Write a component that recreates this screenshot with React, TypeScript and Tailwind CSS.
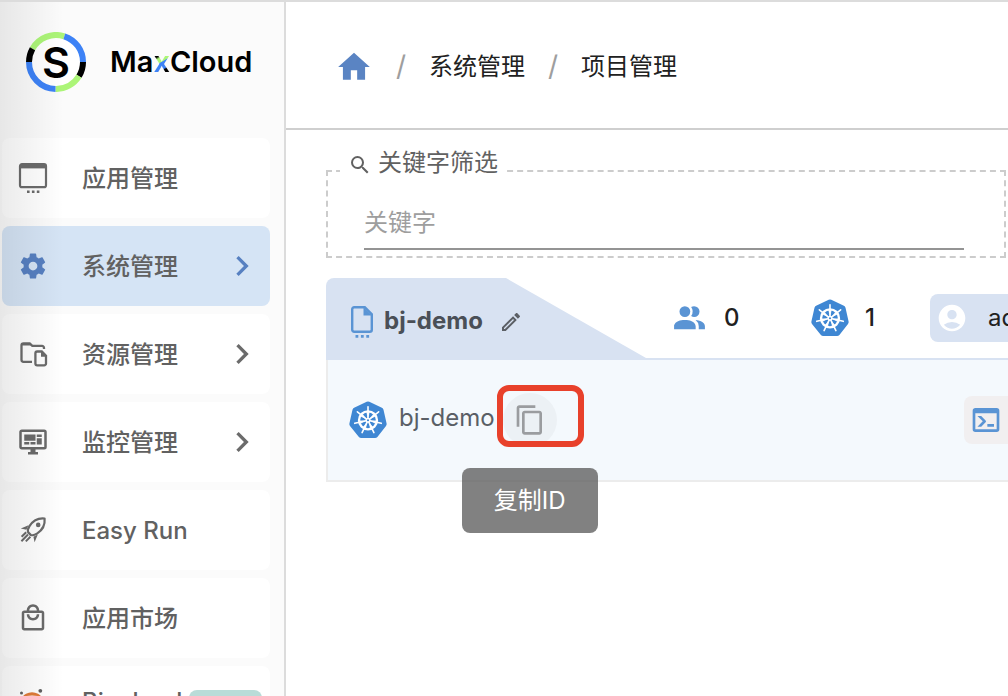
import type { ReactNode } from "react";
import {
  MdAccountCircle,
  MdChevronRight,
  MdContentCopy,
  MdOutlineEdit,
  MdSearch,
} from "react-icons/md";

type IconProps = { className?: string };

function PathIcon({ d, className }: { d: string; className?: string }) {
  return (
    <svg viewBox="0 0 24 24" fill="currentColor" className={className} aria-hidden="true">
      <path d={d} />
    </svg>
  );
}

const HOME = "M10,20V14H14V20H19V12H22L12,3L2,12H5V20H10Z";
const COG =
  "M12,15.5A3.5,3.5 0 0,1 8.5,12A3.5,3.5 0 0,1 12,8.5A3.5,3.5 0 0,1 15.5,12A3.5,3.5 0 0,1 12,15.5M19.43,12.97C19.47,12.65 19.5,12.33 19.5,12C19.5,11.67 19.47,11.34 19.43,11L21.54,9.37C21.73,9.22 21.78,8.95 21.66,8.73L19.66,5.27C19.54,5.05 19.27,4.96 19.05,5.05L16.56,6.05C16.04,5.66 15.5,5.32 14.87,5.07L14.5,2.42C14.46,2.18 14.25,2 14,2H10C9.75,2 9.54,2.18 9.5,2.42L9.13,5.07C8.5,5.32 7.96,5.66 7.44,6.05L4.95,5.05C4.73,4.96 4.46,5.05 4.34,5.27L2.34,8.73C2.21,8.95 2.27,9.22 2.46,9.37L4.57,11C4.53,11.34 4.5,11.67 4.5,12C4.5,12.33 4.53,12.65 4.57,12.97L2.46,14.63C2.27,14.78 2.21,15.05 2.34,15.27L4.34,18.73C4.46,18.95 4.73,19.03 4.95,18.95L7.44,17.94C7.96,18.34 8.5,18.68 9.13,18.93L9.5,21.58C9.54,21.82 9.75,22 10,22H14C14.25,22 14.46,21.82 14.5,21.58L14.87,18.93C15.5,18.67 16.04,18.34 16.56,17.94L19.05,18.95C19.27,19.03 19.54,18.95 19.66,18.73L21.66,15.27C21.78,15.05 21.73,14.78 21.54,14.63L19.43,12.97Z";
const MONITOR =
  "M21,16V4H3V16H21M21,2A2,2 0 0,1 23,4V16A2,2 0 0,1 21,18H14V20H16V22H8V20H10V18H3C1.89,18 1,17.1 1,16V4C1,2.89 1.89,2 3,2H21M5,6H14V11H5V6M15,6H19V8H15V6M19,9V14H15V9H19M5,12H9V14H5V12M10,12H14V14H10V12Z";
const BAG =
  "M19 6H17C17 3.24 14.76 1 12 1S7 3.24 7 6H5C3.9 6 3 6.9 3 8V20C3 21.11 3.9 22 5 22H19C20.11 22 21 21.11 21 20V8C21 6.89 20.11 6 19 6M12 3C13.66 3 15 4.34 15 6H9C9 4.34 10.34 3 12 3M19 20H5V8H19V20M12 12C10.34 12 9 10.66 9 9H7C7 11.76 9.24 14 12 14S17 11.76 17 9H15C15 10.66 13.66 12 12 12Z";
const USERS =
  "M16 17V19H2V17S2 13 9 13 16 17 16 17M12.5 7.5A3.5 3.5 0 1 0 9 11A3.5 3.5 0 0 0 12.5 7.5M15.94 13A5.32 5.32 0 0 1 18 17V19H22V17S22 13.37 15.94 13M15 4A3.39 3.39 0 0 0 13.07 4.59A5 5 0 0 1 13.07 10.41A3.39 3.39 0 0 0 15 11A3.5 3.5 0 0 0 15 4Z";
const CONSOLE =
  "M20,19V7H4V19H20M20,3A2,2 0 0,1 22,5V19A2,2 0 0,1 20,21H4A2,2 0 0,1 2,19V5C2,3.89 2.9,3 4,3H20M13,17V15H18V17H13M9.58,13L5.57,9H8.4L11.7,12.3C12.09,12.69 12.09,13.33 11.7,13.72L8.42,17H5.59L9.58,13Z";

function AppWindowIcon() {
  return (
    <svg viewBox="0 0 32 32" className="size-8" fill="currentColor" aria-hidden="true">
      <rect x="3" y="2.2" width="26" height="23" rx="2" fill="none" stroke="currentColor" strokeWidth="2.2" />
      <path d="M3 2h26v4.4H3z" />
      <path d="M10 28.4h2.6v2.6H10zM14.9 28.4h2.6v2.6h-2.6zM19.8 28.4h2.6v2.6h-2.6z" />
    </svg>
  );
}

function FolderFileIcon() {
  return (
    <svg viewBox="0 0 32 32" className="size-8" fill="none" stroke="currentColor" strokeWidth="2.3" aria-hidden="true">
      <path d="M15 23.8H6.5a2 2 0 0 1-2-2V7.300a2 2 0 0 1 2-2h6.200l2.600 2.600H25a2 2 0 0 1 2 2v1" />
      <path d="M4.500 7.500V5.500h8.500l2 2z" fill="currentColor" stroke="none" />
      <path d="M20.200 13.500h4.600l4.200 4.300v7.700a1.800 1.800 0 0 1-1.800 1.800h-7a1.800 1.800 0 0 1-1.800-1.800V15.300a1.800 1.800 0 0 1 1.800-1.800z" />
      <path d="M24 13v5.800h5.500z" fill="currentColor" stroke="none" />
    </svg>
  );
}

function RocketIcon() {
  return (
    <svg viewBox="0 0 32 32" className="size-8" fill="none" stroke="currentColor" strokeWidth="2.2" aria-hidden="true">
      <path d="M27.600 4.500c-6-.6-11.300 1.700-15.100 7.600-1.600 2.500-2 4.700-1.300 6.300l2.500 2.500c1.600.7 3.800.3 6.300-1.300 5.900-3.800 8.200-9.100 7.600-15.100z" strokeLinejoin="round" />
      <circle cx="21.200" cy="10.900" r="2.300" fill="currentColor" stroke="none" />
      <path d="M11.500 11.300L3.800 14.500l5.600 1.200zM20.800 20.600l-3.200 7.700-1.200-5.600z" fill="currentColor" stroke="none" />
      <path d="M9.200 18.200l-4.600 4.600M11 20.500l-6.600 6.700M13.400 22.800l-4.600 4.600" strokeWidth="2" />
    </svg>
  );
}

function PlanetIcon() {
  return (
    <svg viewBox="0 0 32 32" className="size-8" aria-hidden="true">
      <path d="M4.500 13a12.500 12.500 0 0 1 21 0c-5-3.500-16-3.500-21 0z" fill="#e07b39" />
      <path d="M4.500 19a12.500 12.500 0 0 0 21 0c-5 3.500-16 3.500-21 0z" fill="#e07b39" />
      <circle cx="23.300" cy="5.800" r="1.900" fill="#616161" />
      <circle cx="4.500" cy="8" r="1.500" fill="#616161" />
      <circle cx="7" cy="29" r="2" fill="#616161" />
    </svg>
  );
}

function KubernetesIcon({ className }: IconProps) {
  const spokes = [0, 1, 2, 3, 4, 5, 6];
  return (
    <svg viewBox="0 0 38 38" className={className} aria-hidden="true">
      <path
        d="M17.700.8a3 3 0 0 1 2.600 0l12.600 6a3 3 0 0 1 1.600 2l3.100 13.600a3 3 0 0 1-.6 2.500L28.400 36a3 3 0 0 1-2.300 1.100H12.200A3 3 0 0 1 9.900 36L1 24.900a3 3 0 0 1-.6-2.500L3.500 8.800a3 3 0 0 1 1.600-2z"
        fill="#3f87d3"
      />
      <g transform="translate(19 19.300)" stroke="#fff" fill="none">
        <circle r="9" strokeWidth="2.300" />
        <circle r="1.800" strokeWidth="1.400" />
        {spokes.map((i) => (
          <g key={i} transform={`rotate(${(i * 360) / 7})`}>
            <path d="M0-2V-13.600" strokeWidth="1.600" strokeLinecap="round" />
            <path d="M0-3L-1.400-8H1.400z" fill="#fff" strokeWidth=".4" />
          </g>
        ))}
      </g>
    </svg>
  );
}

function ProjectFileIcon() {
  return (
    <svg viewBox="0 0 24 34" className="h-[34px] w-6 text-[#5a94d4]" fill="currentColor" aria-hidden="true">
      <path
        d="M4.200 2.200h10.600l7 7v15.600a2 2 0 0 1-2 2H4.200a2 2 0 0 1-2-2V4.200a2 2 0 0 1 2-2z"
        fill="none"
        stroke="currentColor"
        strokeWidth="2.400"
      />
      <path d="M13.500 2v8.500h8.500z" />
      <path d="M5.500 30h2.800v2.800H5.500zM10.900 30h2.800v2.800h-2.800zM16.300 30h2.800v2.800h-2.800z" />
    </svg>
  );
}

function LogoMark() {
  return (
    <svg viewBox="0 0 60 60" className="size-[60px]" role="img" aria-label="MaxCloud">
      <circle cx="30" cy="30" r="27" fill="#fff" />
      <g fill="none" strokeWidth="6">
        <path d="M6.500 16.700A27 27 0 0 1 38.300 4.300" stroke="#acf578" />
        <path d="M38.300 4.300A27 27 0 0 1 57 30" stroke="#3d82f6" />
        <path d="M57 30A27 27 0 0 1 53 44.200" stroke="#000" />
        <path d="M53 44.200A27 27 0 0 1 29.500 57" stroke="#acf578" />
        <path d="M29.500 57A27 27 0 0 1 3 30" stroke="#3d82f6" />
        <path d="M3 30A27 27 0 0 1 6.500 16.700" stroke="#000" />
      </g>
      <text x="30" y="46" textAnchor="middle" fontFamily="Inter, sans-serif" fontSize="43" fontWeight="600">
        S
      </text>
    </svg>
  );
}

type MenuItem = {
  label: string;
  icon: ReactNode;
  active?: boolean;
  expandable?: boolean;
  badge?: string;
};

const MENU: MenuItem[] = [
  { label: "应用管理", icon: <AppWindowIcon /> },
  { label: "系统管理", icon: <PathIcon d={COG} className="size-[30px]" />, active: true, expandable: true },
  { label: "资源管理", icon: <FolderFileIcon />, expandable: true },
  { label: "监控管理", icon: <PathIcon d={MONITOR} className="size-[30px]" />, expandable: true },
  { label: "Easy Run", icon: <RocketIcon /> },
  { label: "应用市场", icon: <PathIcon d={BAG} className="size-[30px]" /> },
  { label: "Bigcloud", icon: <PlanetIcon />, badge: "Beta" },
];

function itemClass(item: MenuItem) {
  if (item.active) {
    return "flex h-20 shrink-0 items-center rounded-lg bg-[#d5e4f5] pr-2 text-[#5780c1]";
  }
  if (item.badge) {
    return "flex h-20 shrink-0 items-center rounded-lg bg-white pr-2 pb-2.5 text-[#6b6b6b]";
  }
  return "flex h-20 shrink-0 items-center rounded-lg bg-white pr-2 text-[#6b6b6b]";
}

function Sidebar() {
  return (
    <aside className="relative flex w-[286px] shrink-0 flex-col border-r-2 border-[#dcdcdc] bg-[#fbfbfb]">
      <div className="flex h-[136px] shrink-0 items-start gap-6 pt-[30px] pl-[26px]">
        <LogoMark />
        <span className="text-[29px] leading-[60px] font-semibold text-black">
          Ma
          <span className="bg-[linear-gradient(150deg,#000_34%,#acf578_40%,#acf578_50%,#3d82f6_52%,#3d82f6_68%,#000_72%)] bg-clip-text text-transparent">
            x
          </span>
          Cloud
        </span>
      </div>
      <nav className="flex flex-col gap-2 pr-3.5 pl-0.5">
        {MENU.map((item) => (
          <a key={item.label} href="#" className={itemClass(item)}>
            <span className="flex w-[62px] shrink-0 justify-center">{item.icon}</span>
            <span className="pt-0.5 pl-[18px] text-2xl font-medium text-[#616161]">{item.label}</span>
            {item.expandable && <MdChevronRight className="ml-auto size-10" />}
            {item.badge && (
              <span className="mt-2.5 ml-auto flex h-8 w-[73px] items-center justify-center rounded-lg bg-[#b9dcd8] text-xl text-[#00796b]">
                {item.badge}
              </span>
            )}
          </a>
        ))}
      </nav>
      <div className="pointer-events-none absolute inset-y-0 left-0 w-16 bg-linear-to-r from-black/8 to-transparent" />
    </aside>
  );
}

function Breadcrumb() {
  return (
    <nav
      aria-label="Breadcrumb"
      className="flex h-32 shrink-0 items-center border-b-2 border-[#cfcfcf] pt-1 pl-[49px] text-2xl text-[#212121]"
    >
      <a href="#" aria-label="Home" className="text-[#5a84c3]">
        <PathIcon d={HOME} className="size-[38px]" />
      </a>
      <span className="w-14 text-center text-[28px] text-[#9e9e9e]">/</span>
      <a href="#">系统管理</a>
      <span className="w-14 text-center text-[28px] text-[#9e9e9e]">/</span>
      <a href="#">项目管理</a>
    </nav>
  );
}

function KeywordFilter() {
  return (
    <fieldset className="mr-0.5 border-2 border-dashed border-[#cccccc] pr-10 pb-1.5 pl-9">
      <legend className="-ml-6 flex h-[52px] items-start gap-1.5 px-2 text-2xl leading-9 text-[#616161]">
        <MdSearch className="mt-2 size-6" />
        关键字筛选
      </legend>
      <input
        type="text"
        aria-label="关键字"
        placeholder="关键字"
        className="block h-[53px] w-full rounded-none border-b-2 border-[#949494] bg-transparent text-2xl outline-none placeholder:text-[#9e9e9e]"
      />
    </fieldset>
  );
}

function ProjectCard() {
  return (
    <section className="mt-5">
      <header className="flex h-[82px] items-center overflow-hidden border-b-2 border-[#d8e2f2]">
        <div className="flex h-20 w-80 shrink-0 items-center rounded-tl-lg bg-[#d8e2f2] pt-2 pl-6 [clip-path:polygon(0_0,180px_0,320px_100%,0_100%)]">
          <ProjectFileIcon />
          <h2 className="pb-0.5 pl-2.5 text-2xl font-bold text-[#4a4f57]">bj-demo</h2>
          <button type="button" aria-label="编辑" className="ml-4 text-[#5c6066]">
            <MdOutlineEdit className="size-6" />
          </button>
        </div>
        <div className="ml-[25px] flex w-[140px] shrink-0 items-center gap-4 text-2xl text-[#212121]">
          <PathIcon d={USERS} className="size-[37px] text-[#5a94d4]" />
          <span className="font-medium">0</span>
        </div>
        <div className="flex w-[119px] shrink-0 items-center gap-4 text-2xl text-[#212121]">
          <KubernetesIcon className="size-[38px]" />
          <span className="font-medium">1</span>
        </div>
        <div className="flex h-12 shrink-0 items-center gap-5 rounded-lg bg-[#d8e2f2] px-1.5 text-2xl text-[#212121]">
          <MdAccountCircle className="size-8 text-white" />
          admin
        </div>
      </header>
      <div className="flex h-[122px] items-center border-b-2 border-l-2 border-[#ececec] bg-[#f4f9fd] pl-[21px]">
        <KubernetesIcon className="size-[38px]" />
        <span className="pb-1 pl-3 text-2xl text-[#5a5f66]">bj-demo</span>
        <div className="relative ml-2">
          <button
            type="button"
            aria-label="复制ID"
            aria-describedby="copy-tip"
            className="flex size-[54px] items-center justify-center rounded-full bg-[#ecf1f5] text-[#9a9c9f]"
          >
            <MdContentCopy className="size-8" />
          </button>
          <div className="absolute -top-2 -left-1.5 h-[62px] w-[87px] rounded-xl border-6 border-[#e8412b]" />
          <div
            id="copy-tip"
            role="tooltip"
            className="absolute top-[75px] -left-[41px] flex h-[65px] w-[136px] items-center justify-center rounded-lg bg-[#616161]/80 text-2xl whitespace-nowrap text-white"
          >
            复制ID
          </div>
        </div>
        <button
          type="button"
          aria-label="终端"
          className="ml-auto flex h-12 w-11 shrink-0 items-center justify-center rounded-l-lg bg-[#f1eff0] text-[#5a94d4]"
        >
          <PathIcon d={CONSOLE} className="size-8" />
        </button>
      </div>
    </section>
  );
}

export default function App() {
  return (
    <div className="flex h-screen overflow-hidden border-t-2 border-[#dcdcdc] bg-white font-['Inter','Noto_Sans_CJK_SC',sans-serif]">
      <Sidebar />
      <div className="flex min-w-0 flex-1 flex-col">
        <Breadcrumb />
        <main className="pt-[15px] pl-10">
          <KeywordFilter />
          <ProjectCard />
        </main>
      </div>
    </div>
  );
}
